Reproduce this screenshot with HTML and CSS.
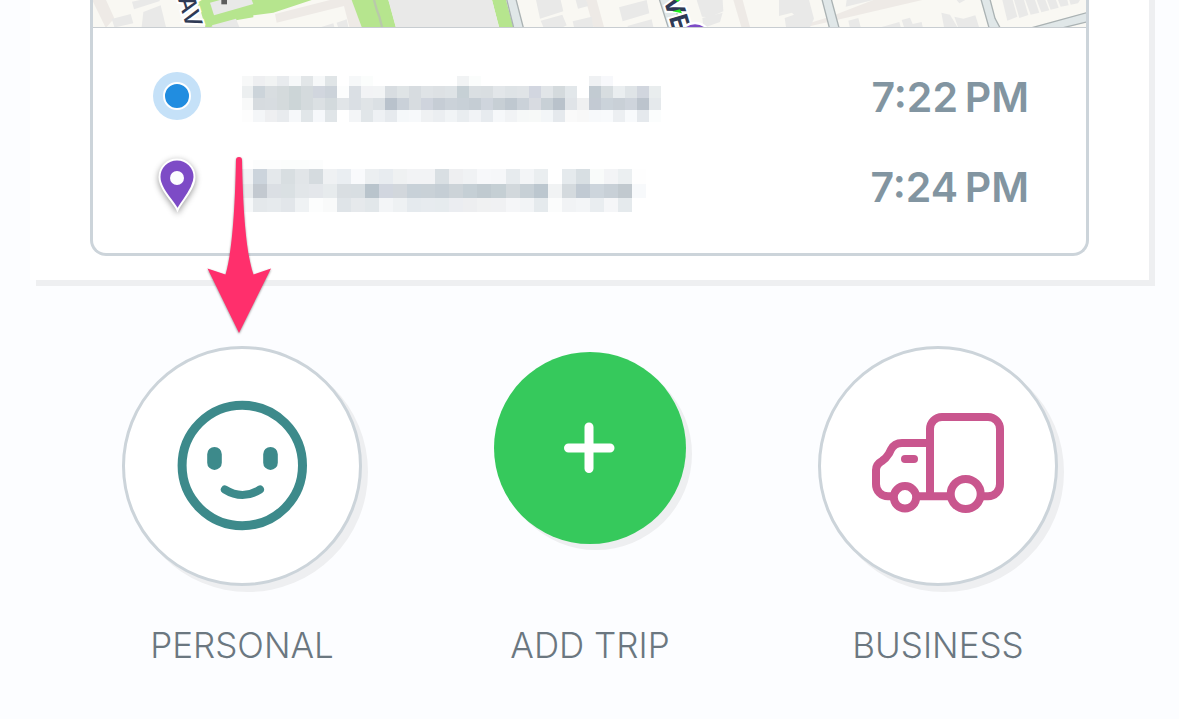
FILE: index.html
```html
<!DOCTYPE html>
<html lang="en">
<head>
    <meta charset="UTF-8">
    <meta name="viewport" content="width=device-width, initial-scale=1.0">
    <title>Classify Trip</title>
    <link rel="stylesheet" href="styles.css">
</head>
<body>
    <main class="screen">
        <section class="panel">
            <div class="trip-card">
                <svg class="map" viewBox="279 0 2979 81" preserveAspectRatio="xMidYMax slice" aria-hidden="true">
                    <rect class="map-land" x="279" y="0" width="2979" height="81"/>
                    <!-- side streets -->
                    <g class="map-street">
                        <path d="M279 0H318L343 55L320 81H316L279 5Z"/>
                        <path d="M825 42L990 0H1060L1087 81H1048L1032 18L830 68Z"/>
                        <path d="M1757 0H1790L1812 81H1780Z"/>
                        <path d="M2200 0H2228L2250 81H2224Z"/>
                        <path d="M2390 81L2490 50L2620 0H2767L2420 81Z"/>
                    </g>
                    <!-- parks -->
                    <g class="map-park">
                        <path d="M588 0H935L820 38L760 46V52L712 60L632 81H616L604 40Z"/>
                        <path d="M1055 0H1165L1187 81H1085Z"/>
                        <path d="M1165 0L1187 81H1170Z"/>
                        <path d="M1476 0H1518L1540 81H1497Z"/>
                    </g>
                    <path class="map-path" d="M1122 0L1130 28L1138 50L1146 81"/>
                    <!-- buildings -->
                    <g class="map-building">
                        <path d="M396 5L420 0H478L480 3L402 28Z"/>
                        <path d="M335 57L392 42L400 70L350 81H343Z"/>
                        <path d="M425 81L430 36L482 16L498 81Z"/>
                        <path d="M630 8L660 0H755L760 12L642 46Z"/>
                        <path d="M636 76L708 56L718 81H638Z"/>
                        <path d="M964 81L1000 70L1003 81ZM1010 68L1040 58L1045 81H1014Z"/>
                        <path d="M1165 0H1476L1497 81H1187Z"/>
                        <path d="M1608 0H1682L1690 34L1620 56Z"/>
                        <path d="M1622 62L1687 44L1700 76L1690 81H1630Z"/>
                        <path d="M1727 0H1758L1765 18L1734 26Z"/>
                        <path d="M1718 64L1775 50L1780 81H1722Z"/>
                        <path d="M1857 22L1940 0L1948 40L1868 64Z"/>
                        <path d="M1882 78L1955 58L1960 81H1884Z"/>
                        <path d="M2090 0H2168L2170 34L2130 52L2106 50Z"/>
                        <path d="M2107 54L2168 38L2160 66L2118 81H2110Z"/>
                        <path d="M2337 0H2427L2442 56L2430 81H2358L2354 54L2382 44L2376 38L2337 48Z"/>
                        <path d="M2537 20L2620 0H2540Z"/>
                        <path d="M2545 62L2575 54L2582 81H2549Z"/>
                        <path d="M2645 81L2698 66L2702 81ZM2705 60L2730 53L2738 72L2765 66L2768 81H2712Z"/>
                        <path d="M2824 38L2850 44L2872 81H2832ZM2863 50L2890 56L2926 46L2937 81H2874Z"/>
                        <path d="M2870 0H2896L2878 10ZM3007 0H3038L3052 50L3022 62Z"/>
                        <path d="M3042 0H3072L3085 45L3058 54ZM3076 0H3105L3118 38L3092 44ZM3110 0H3136L3148 31L3124 37ZM3141 0H3168L3176 23L3152 29ZM3174 0H3202L3206 16L3182 20ZM3208 0H3240L3234 10L3212 14Z"/>
                    </g>
                    <rect class="map-mark" x="664" y="-2" width="17" height="15"/>
                    <!-- main roads -->
                    <g class="map-road">
                        <path d="M1520 -2L1541 83H1570L1548 -2Z"/>
                        <path d="M1978 -2L2005 83H2042L2020 -2Z"/>
                        <path d="M2466 -2L2488 83H2517L2494 -2Z"/>
                        <path d="M2943 -2L2967 83H3000L2985 55L2970 -2Z"/>
                        <path d="M3096 83L3260 38V66L3190 83Z"/>
                    </g>
                    <text class="map-label" transform="translate(533 -4) rotate(73)">AV</text>
                    <text class="map-label map-label-bold" transform="translate(1990 -2) rotate(73)">VE</text>
                    <path class="map-route" d="M2022 -2L2034 6L2040 -2ZM2017 34L2040 28L2046 40Z"/>
                    <circle class="map-pin" cx="2085" cy="118" r="49"/>
                </svg>

                <ul class="stops">
                    <li class="stop">
                        <svg class="stop-icon" viewBox="0 0 48 48" role="img" aria-label="Start">
                            <circle cx="24" cy="24" r="24" fill="#c5e1f8"/>
                            <circle cx="24" cy="24" r="13" fill="#218de0" stroke="#fff" stroke-width="2"/>
                        </svg>
                        <svg class="address" data-address="start" width="420" height="46" role="img" aria-label="Hidden start address"></svg>
                        <time class="stop-time" datetime="19:22">7:22&#8201;PM</time>
                    </li>
                    <li class="stop">
                        <svg class="stop-icon stop-pin" viewBox="0 0 48 48" role="img" aria-label="End">
                            <path d="M24.500 48C21 40 6.500 27 6.500 15A17.500 17.500 0 0 1 41.500 15C41.500 27 28 40 24.500 48Z" fill="#7d4bc6" stroke="#fff" stroke-width="2"/>
                            <circle cx="24" cy="16" r="7" fill="#fcfdff"/>
                        </svg>
                        <svg class="address" data-address="end" width="420" height="52" role="img" aria-label="Hidden end address"></svg>
                        <time class="stop-time" datetime="19:24">7:24&#8201;PM</time>
                    </li>
                </ul>
            </div>

            <svg class="arrow" viewBox="0 0 68 182" aria-hidden="true">
                <path d="M31 5Q31 2 34 2Q37 2 37 5C38 55 41 98 48.500 119.500L66 113.500L34 178L2.500 113.500L20.500 119.500C27 98 30 55 31 5Z"/>
            </svg>
        </section>

        <nav class="actions">
            <button type="button" class="action">
                <span class="circle">
                    <svg viewBox="0 0 240 240" fill="none" stroke="#3d8a8b" stroke-linecap="round" aria-hidden="true">
                        <circle cx="120.300" cy="119.500" r="60.200" stroke-width="9"/>
                        <path d="M92.500 108.500V117M148.500 108.500V117" stroke-width="14.600" transform="translate(0 -0.300)"/>
                        <path d="M102.800 143.500Q120.500 154.500 138 143.500" stroke-width="8"/>
                    </svg>
                </span>
                <span class="label">PERSONAL</span>
            </button>
            <button type="button" class="action">
                <span class="circle circle-add">
                    <svg viewBox="0 0 192 192" fill="none" stroke="#fff" stroke-width="9" stroke-linecap="round" aria-hidden="true">
                        <path d="M95 75V116.500M74.500 96H116"/>
                    </svg>
                </span>
                <span class="label">ADD TRIP</span>
            </button>
            <button type="button" class="action">
                <span class="circle">
                    <svg viewBox="0 0 240 240" fill="none" stroke="#c9568e" stroke-width="8" aria-hidden="true">
                        <path d="M112 151V83A12 12 0 0 1 124 71H170A12 12 0 0 1 182 83V138A12 12 0 0 1 170 150.300H163M132 150.300H98M73 150.300H70A12 12 0 0 1 58 138V124C58 120 60.500 117 64 115Q68 112.500 71 107.500L73 103.500C75 99.500 79 97 84 97H112"/>
                        <circle cx="87" cy="151.300" r="11.200"/>
                        <circle cx="147.700" cy="148" r="15"/>
                        <path d="M87 113H96" stroke-linecap="round"/>
                    </svg>
                </span>
                <span class="label">BUSINESS</span>
            </button>
        </nav>
    </main>

    <script src="script.js"></script>
</body>
</html>
```

FILE: styles.css
```css
* {
    box-sizing: border-box;
}
body {
    margin: 0;
    font-family: Inter, "Liberation Sans", sans-serif;
    background-color: #fcfdff;
}
.screen {
    overflow: hidden;
}
.panel {
    position: relative;
    margin: 0 30px;
    padding: 0 60px 24px;
    background-color: #fff;
    box-shadow: 6px 0 0 #eeeff1, 6px 6px 0 #eeeff1;
}

/* Trip card */
.trip-card {
    border: 3px solid #ccd4da;
    border-top: none;
    border-radius: 0 0 16px 16px;
}
.map {
    display: block;
    width: 100%;
    height: 28px;
    border-bottom: 1px solid #c8cdd1;
}
.map-land {
    fill: #f9f8f3;
}
.map-street {
    fill: #eeeae6;
}
.map-park {
    fill: #b6e58e;
}
.map-path {
    fill: none;
    stroke: #b9c9aa;
    stroke-width: 7;
}
.map-building {
    fill: #e9e9e8;
}
.map-mark {
    fill: #5d5d5d;
}
.map-road {
    fill: #e0e7e8;
    stroke: #aab2b3;
    stroke-width: 4;
}
.map-route {
    fill: #1ff01f;
}
.map-label {
    font-size: 70px;
    font-weight: 500;
    fill: #2f3a55;
    stroke: #fff;
    stroke-width: 12px;
    paint-order: stroke;
}
.map-label-bold {
    font-size: 76px;
    font-weight: 700;
}
.map-pin {
    fill: #7d4bc6;
    stroke: #fff;
    stroke-width: 7;
}

/* Stops */
.stops {
    display: flex;
    flex-direction: column;
    gap: 40px;
    margin: 0;
    padding: 44px 57px 41px 60px;
    list-style: none;
}
.stop {
    display: flex;
    align-items: flex-end;
    height: 50px;
}
.stop-icon {
    flex: none;
    align-self: flex-start;
    width: 48px;
    height: 48px;
    margin-right: 41px;
    overflow: visible;
}
.stop-pin {
    filter: drop-shadow(0 2px 3px rgba(0, 0, 0, 0.4));
}
.address {
    flex: none;
}
.stop-time {
    margin-left: auto;
    font-size: 41px;
    font-weight: 600;
    line-height: 50px;
    white-space: nowrap;
    color: #8295a1;
}

/* Arrow pointing at the personal button */
.arrow {
    position: absolute;
    left: 175px;
    top: 155px;
    z-index: 1;
    width: 68px;
    height: 182px;
    fill: #ff2f6c;
    filter: drop-shadow(0 1px 1px rgba(0, 0, 0, 0.4));
}

/* Action buttons */
.actions {
    display: flex;
    justify-content: space-between;
    padding: 66px 121px 48px 122px;
}
.action {
    display: grid;
    grid-template-rows: 240px auto;
    row-gap: 37px;
    justify-items: center;
    width: 240px;
    padding: 0;
    border: none;
    background: none;
    font-family: inherit;
    cursor: pointer;
}
.circle {
    display: block;
    width: 240px;
    height: 240px;
    border-radius: 50%;
    border: 3px solid #ccd4da;
    background-color: #fff;
    box-shadow: 6px 6px 0 #eeeff1;
}
.circle svg {
    display: block;
    margin: -3px;
    width: 240px;
    height: 240px;
}
.circle-add {
    width: 192px;
    height: 192px;
    margin-top: 6px;
    border: none;
    background-color: #36c95c;
}
.circle-add svg {
    margin: 0;
    width: 192px;
    height: 192px;
}
.label {
    font-size: 35px;
    font-weight: 300;
    line-height: 44px;
    white-space: nowrap;
    color: #6b7780;
}
```

FILE: script.js
```js
// Pixelated stand-ins for the hidden addresses.
// x and y are the cell edges, every row is a list of hex colors.
const addresses = {
    start: {
        first: 11,
        cell: 12,
        y: [0, 10, 22, 34, 46],
        rows: [
            "f7f8f8 eeeff1 f1f3f3 e8ebee f6f8f9 e2e6e8 f6f8f9 e0e5e7 ffffff f6f8f9 fbfdfc ffffff ffffff ffffff ffffff ffffff ffffff ffffff f1f3f4 fbfdfc ffffff ffffff ffffff ffffff ffffff ffffff ffffff ffffff ffffff eff1f3 f7f8fb",
            "eceff0 ccd4da d8dde0 d4dadc ccd5d7 d4dadd d1d6de ccd3da fcfdfd dadfe4 f2f3f5 f2f4f5 d8dde1 dfe4e6 d7dce0 dfe3e6 dde1e4 dee3e6 c6d0d5 dadfe2 d9dee1 e2e6e9 dee3e6 e0e4e7 d2d6e0 e1e5e8 d4dadd e2e7ea ffffff c2cbd2 d7dde0 eaeef0 dfe4e7 d1d6de e9edee",
            "f8f9f9 d6dbdf d7dce0 d4dadc ccd5d7 d4dadd dbe0e3 d3dadd e1e5e8 dadfe4 e0e4e7 dbe0e4 b9c2cc cad1d9 d7dce0 cfd4dd c6cdd5 cbd2d9 c8d0d7 c5cdd4 cfd5dd c7cfd5 bfc8d0 cbd2d9 d8dbe1 c8d0d6 b9c2cb e0e4e8 eff0f1 c3cad3 cbd3da c9d0d7 ced4dc bcc4cd e5e9ec",
            "fdfdfd f4f6f8 eeeff1 e8ebee f6f8fa e1e6e9 f6f8fb e0e5e8 ffffff f3f5f7 e1e6e9 eef1f4 e6eaee f5f8fa f7f9fb eff1f3 ebeef1 f1f4f6 e9edf0 f1f3f6 e7ebef f6f8fa f1f3f5 f6f8f8 f7f9f8 f3f6f8 e5e9ed fafafa f8f8f8 f7f9fb f8fafc eceff2 f8fafc e5e9ed fbfdfd"
        ]
    },
    end: {
        first: 10.6,
        cell: 14.05,
        y: [0, 9, 24, 38, 52],
        rows: [
            "ffffff fcfdfd fcfdfd fbfdfc fbfdfc fcfdfd",
            "f1f3f5 ccd4dc e4e8eb d8dee1 e1e5e8 d5dbdf eff1f3 eaeef2 f9fafc eceff1 e8ecf0 eff1f2 f2f3f5 f2f3f5 d9dfe3 eeeff1 f0f2f4 f7f8fa f6f7f9 e7ebee f3f5f7 eaeef0 ffffff e5eaed d8dfe3 f9fbfa f3f4f6 ebeff1 fefefe",
            "e8ebed c3c9d0 dbdfe4 dae0e3 e2e6e9 e4e7eb e7ebed d9dee2 d8dee2 b9c4cc d1d6df d2d7dc c8d1d8 c9d1d7 c5ced5 ccd3d8 c5cfd5 c0cad0 c5cfd4 d2d8dc c7d0d6 bcc7cf f1f3f4 d4dade c1cad3 cdd5dc c8d0d7 c1c9cf f7f9fb",
            "f6f8f9 e4e8eb e6eaed e2e6ea eff2f4 fcfdfd f9fafa dfe4e8 e6e9ec e2e7ea f3f5f7 eef1f3 e5eaee e7ebef e6ebee ebedf1 edeef0 f0f1f2 f0f1f3 f5f6f8 f2f4f6 e5eaed fbfcfc f1f3f5 f3f5f7 e9edf0 f5f6f8 e5eaed"
        ]
    }
};

function drawAddress(svg, data) {
    data.rows.forEach((row, r) => {
        row.split(" ").forEach((color, c) => {
            const left = c === 0 ? 0 : Math.round(data.first + (c - 1) * data.cell);
            const right = Math.round(data.first + c * data.cell);
            const rect = document.createElementNS("http://www.w3.org/2000/svg", "rect");
            rect.setAttribute("x", left);
            rect.setAttribute("y", data.y[r]);
            rect.setAttribute("width", right - left);
            rect.setAttribute("height", data.y[r + 1] - data.y[r]);
            rect.setAttribute("fill", "#" + color);
            svg.appendChild(rect);
        });
    });
}

document.querySelectorAll(".address").forEach((svg) => {
    drawAddress(svg, addresses[svg.dataset.address]);
});
```
